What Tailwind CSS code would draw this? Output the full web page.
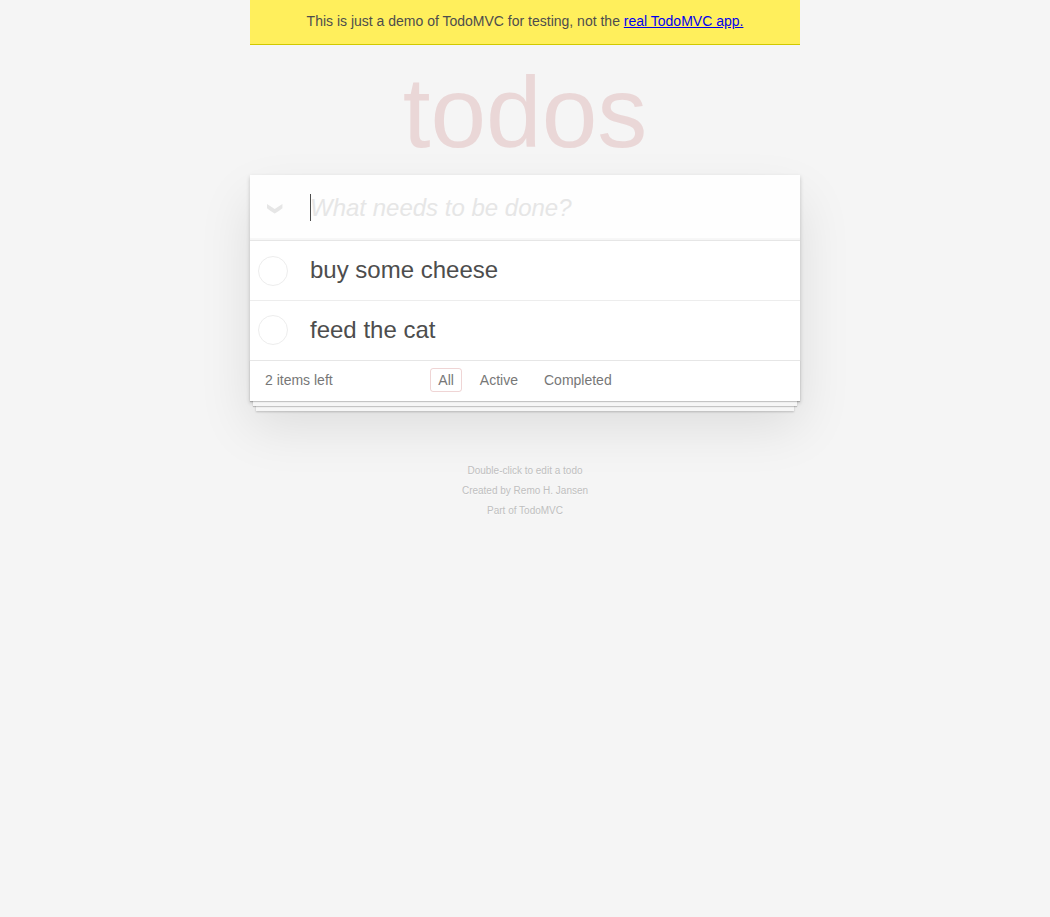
<!DOCTYPE html>
<html lang="en">
<head>
<meta charset="utf-8">
<meta name="viewport" content="width=device-width, initial-scale=1">
<title>TodoMVC</title>
<script src="https://cdn.jsdelivr.net/npm/@tailwindcss/browser@4"></script>
</head>
<body class="min-h-screen bg-[#f5f5f5] px-4 font-['Liberation_Sans',Arial,sans-serif] text-sm leading-5 text-[#4d4d4d] antialiased">
<div class="mx-auto max-w-[550px]">
  <aside class="border-b border-[#d1c900] bg-[#ffef5c] px-3 pt-[11px] pb-[13px] text-center">
    <p>This is just a demo of TodoMVC for testing, not the <a href="#" class="text-[#0000ee] underline">real TodoMVC app.</a></p>
  </aside>

  <h1 class="pt-1 text-center text-[100px] leading-[126px] font-thin text-[#af2f2f]/15">todos</h1>

  <section class="bg-white shadow-[0_2px_4px_0_rgba(0,0,0,0.2),0_25px_50px_0_rgba(0,0,0,0.1)]">
    <header class="relative flex h-[65px] items-center bg-[#fefefe] shadow-[inset_0_-2px_1px_rgba(0,0,0,0.03)]">
      <button type="button" aria-label="Mark all as complete" class="flex h-full w-[60px] shrink-0 items-center pt-[3px] pl-[17px]">
        <svg class="h-[10px] w-4" viewBox="0 0 16 10" fill="#e6e6e6" aria-hidden="true"><path d="M0 0 L7.7 4.9 L15.4 0 V4.3 Q12 7.2 7.7 9.5 Q3.4 7.2 0 4.3 Z"/></svg>
      </button>
      <input type="text" aria-label="New todo" placeholder="What needs to be done?" class="h-full min-w-0 flex-1 bg-transparent text-2xl outline-none placeholder:font-light placeholder:text-[#e6e6e6] placeholder:italic">
      <span class="absolute top-[19px] left-[60px] h-[27px] w-px bg-[#4d4d4d]" aria-hidden="true"></span>
    </header>

    <ul class="relative z-10 border-t border-[#e6e6e6] bg-white">
      <li class="flex h-[60px] items-center border-b border-[#ededed] pl-2">
        <input id="todo-1" type="checkbox" class="mr-[22px] size-[30px] shrink-0 appearance-none rounded-full border border-[#ededed] bg-white">
        <label for="todo-1" class="pb-0.5 text-2xl leading-7">buy some cheese</label>
      </li>
      <li class="flex h-[59px] items-center pb-px pl-2">
        <input id="todo-2" type="checkbox" class="mr-[22px] size-[30px] shrink-0 appearance-none rounded-full border border-[#ededed] bg-white">
        <label for="todo-2" class="text-2xl leading-7">feed the cat</label>
      </li>
    </ul>

    <footer class="grid h-[41px] grid-cols-[1fr_auto_1fr] items-center border-t border-[#e6e6e6] px-[15px] pb-0.5 text-[#777777] shadow-[0_1px_1px_rgba(0,0,0,0.2),0_8px_0_-3px_#f6f6f6,0_9px_1px_-3px_rgba(0,0,0,0.2),0_16px_0_-6px_#f6f6f6,0_17px_2px_-6px_rgba(0,0,0,0.2)]">
      <span>2 items left</span>
      <nav class="flex gap-[10px] leading-4">
        <a href="#" class="rounded-[3px] border border-[#af2f2f]/20 px-[7px] py-[3px]">All</a>
        <a href="#" class="rounded-[3px] border border-transparent px-[7px] py-[3px]">Active</a>
        <a href="#" class="rounded-[3px] border border-transparent px-[7px] py-[3px]">Completed</a>
      </nav>
    </footer>
  </section>

  <footer class="pt-[60px] text-center text-[10px] leading-5 text-[#bfbfbf] text-shadow-[0_1px_0_rgba(255,255,255,0.5)]">
    <p>Double-click to edit a todo</p>
    <p>Created by <a href="#">Remo H. Jansen</a></p>
    <p>Part of <a href="#">TodoMVC</a></p>
  </footer>
</div>
</body>
</html>
